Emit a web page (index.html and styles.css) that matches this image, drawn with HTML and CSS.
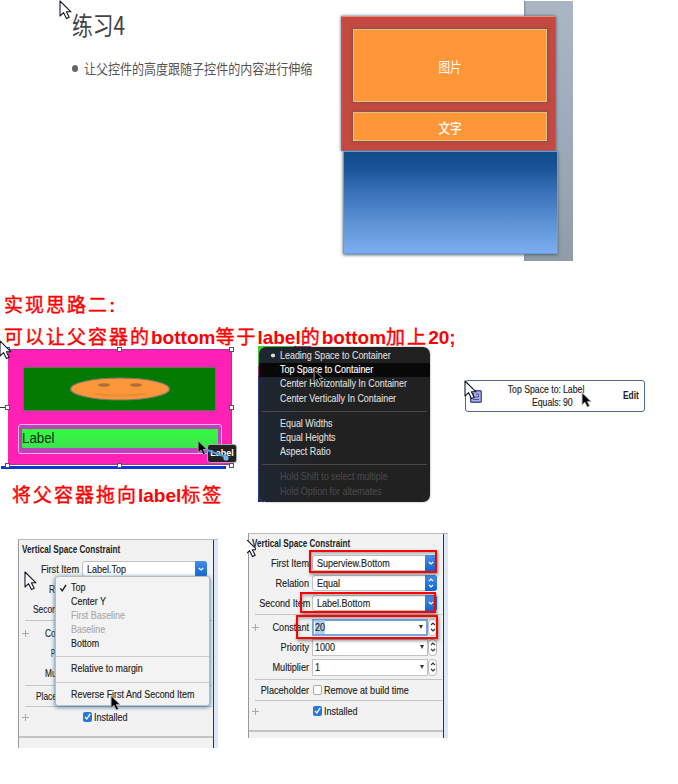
FILE: index.html
```html
<!DOCTYPE html>
<html lang="zh-CN">
<head>
<meta charset="utf-8">
<title>练习4</title>
<link rel="stylesheet" href="styles.css">
</head>
<body>
<svg class="defs" width="0" height="0">
  <symbol id="arrow" viewBox="0 0 13 20"><path d="M1 1V16L4.6 12.7L7.5 18.6L10.2 17.3L7.4 11.8H12Z" stroke-width="1.1" stroke-linejoin="round"/></symbol>
  <symbol id="down" viewBox="0 0 8 8"><path d="M1.8 3L4 5L6.2 3" fill="none" stroke="currentColor" stroke-width="1.2"/></symbol>
  <symbol id="updown" viewBox="0 0 8 14"><path d="M2 5L4 3L6 5M2 9L4 11L6 9" fill="none" stroke="currentColor" stroke-width="1.1"/></symbol>
  <symbol id="check" viewBox="0 0 9 9"><path d="M2 4.8L3.8 7L7.2 1.8" fill="none" stroke="currentColor" stroke-width="1.3"/></symbol>
</svg>

<section class="slide">
  <svg class="cursor c-slide"><use href="#arrow"/></svg>
  <div class="slide-text">
    <h1>练习4</h1>
    <p><i class="bullet"></i><span>让父控件的高度跟随子控件的内容进行伸缩</span></p>
  </div>
  <div class="diagram">
    <div class="parent">
      <div class="child picture"><span>图片</span></div>
      <div class="child words"><span>文字</span></div>
    </div>
    <div class="blue"></div>
  </div>
</section>

<section class="idea">
  <p><b>实现思路二</b>:</p>
  <p><b>可以让父容器的</b>bottom<b>等于</b>label<b>的</b>bottom<b>加上</b>20;</p>
</section>

<section class="figures">
  <div class="first">
    <div class="canvas">
      <div class="pink">
        <div class="green"><svg width="102" height="26" viewBox="0 0 102 26"><ellipse cx="51" cy="13" rx="49.5" ry="11" fill="#fb963a" stroke="#7b7668" stroke-width="1.2"/><ellipse cx="35" cy="9" rx="6" ry="1.7" fill="#ad703b"/><ellipse cx="67" cy="9" rx="6" ry="1.7" fill="#ad703b"/><path d="M25 18Q51 21 77 18" fill="none" stroke="#e88a31" stroke-width="1.5"/></svg></div>
        <div class="outline"><div class="lime"><span>Label</span></div></div>
      </div>
      <div class="baseline"></div>
      <div class="tip">Label</div>
      <svg class="marks" width="240" height="126">
        <path d="M0 61.5H8" stroke="#333"/>
        <path d="M199 101L226 111" stroke="#4d9bdb" stroke-width="2.2"/><circle cx="226" cy="112" r="2.6" fill="#73b9ed"/>
        <g fill="#fff" stroke="#555"><rect x="5.500" y="1.500" width="4" height="4"/><rect x="117.500" y="1.500" width="4" height="4"/><rect x="229.500" y="1.500" width="4" height="4"/><rect x="5.500" y="59.500" width="4" height="4"/><rect x="229.500" y="59.500" width="4" height="4"/><rect x="5.500" y="117.500" width="4" height="4"/><rect x="117.500" y="117.500" width="4" height="4"/><rect x="229.500" y="117.500" width="4" height="4"/></g>
      </svg>
      <svg class="cursor c-canvas"><use href="#arrow"/></svg>
      <svg class="cursor dark c-drag"><use href="#arrow"/></svg>
    </div>
    <p class="caption"><b>将父容器拖向</b>label<b>标签</b></p>
  </div>

  <div class="hud-wrap">
    <ul class="hud">
      <li class="dot"><span>Leading Space to Container</span></li>
      <li class="active"><span>Top Space to Container</span></li>
      <li><span>Center Horizontally In Container</span></li>
      <li><span>Center Vertically In Container</span></li>
      <li class="sep"></li>
      <li><span>Equal Widths</span></li>
      <li><span>Equal Heights</span></li>
      <li><span>Aspect Ratio</span></li>
      <li class="sep"></li>
      <li class="off"><span>Hold Shift to select multiple</span></li>
      <li class="off"><span>Hold Option for alternates</span></li>
    </ul>
    <svg class="cursor dark c-hud"><use href="#arrow"/></svg>
  </div>

  <div class="card">
    <svg class="chip" width="12" height="13" viewBox="0 0 12 13"><rect x=".7" y=".7" width="10.600" height="11.600" rx="1" fill="#b4a9ee" stroke="#3c5795" stroke-width="1.400"/><path d="M3 9.500H9M3.500 3V7H8.500V4H6" fill="none" stroke="#42539b"/></svg>
    <div class="pairs"><span class="k">Top Space to:</span><span>Label</span><span class="k">Equals:</span><span>90</span></div>
    <strong>Edit</strong>
    <svg class="cursor c-card"><use href="#arrow"/></svg>
    <svg class="cursor dark c-edit"><use href="#arrow"/></svg>
  </div>
</section>

<section class="panels">
  <div class="panel left">
    <h2><span>Vertical Space Constraint</span></h2>
    <div class="row"><label>First Item</label><div class="field"><span>Label.Top</span><i class="pop"><svg width="8" height="8"><use href="#down"/></svg></i></div></div>
    <div class="row"><label class="cut s2">R</label></div>
    <div class="row"><label class="cut">Secon</label></div>
    <hr>
    <div class="row"><em></em><label class="cut s1">Co</label></div>
    <div class="row"><label class="cut s3">P</label></div>
    <div class="row"><label class="cut s1">Mu</label></div>
    <hr class="h2">
    <div class="row short"><label class="cut s0">Place</label></div>
    <hr class="h3">
    <div class="row"><em></em><label></label><i class="box on"><svg width="9" height="9"><use href="#check"/></svg></i><span class="boxtext">Installed</span></div>
    <div class="rule"></div>
    <ul class="menu">
      <li><svg width="10" height="10"><use href="#check"/></svg><span>Top</span></li>
      <li><span>Center Y</span></li>
      <li class="off"><span>First Baseline</span></li>
      <li class="off"><span>Baseline</span></li>
      <li><span>Bottom</span></li>
      <li class="sep"></li>
      <li><span>Relative to margin</span></li>
      <li class="sep"></li>
      <li><span>Reverse First And Second Item</span></li>
    </ul>
    <svg class="cursor c-left"><use href="#arrow"/></svg>
    <svg class="cursor dark c-menu"><use href="#arrow"/></svg>
  </div>

  <div class="panel right">
    <h2><span>Vertical Space Constraint</span></h2>
    <div class="row"><label>First Item</label><div class="field"><span>Superview.Bottom</span><i class="pop"><svg width="8" height="8"><use href="#down"/></svg></i></div></div>
    <div class="row"><label>Relation</label><div class="field"><span>Equal</span><i class="pop"><svg width="8" height="14"><use href="#updown"/></svg></i></div></div>
    <div class="row"><label>Second Item</label><div class="field"><span>Label.Bottom</span><i class="pop"><svg width="8" height="8"><use href="#down"/></svg></i></div></div>
    <hr>
    <div class="row"><em></em><label>Constant</label><div class="field num focus"><span>20</span><i class="tri"></i></div><i class="step"><svg width="8" height="14"><use href="#updown"/></svg></i></div>
    <div class="row"><label>Priority</label><div class="field num"><span>1000</span><i class="tri"></i></div><i class="step"><svg width="8" height="14"><use href="#updown"/></svg></i></div>
    <div class="row"><label>Multiplier</label><div class="field num"><span>1</span><i class="tri"></i></div><i class="step"><svg width="8" height="14"><use href="#updown"/></svg></i></div>
    <hr class="h2">
    <div class="row short"><label>Placeholder</label><i class="box"></i><span class="boxtext">Remove at build time</span></div>
    <hr class="h3">
    <div class="row"><em></em><label></label><i class="box on"><svg width="9" height="9"><use href="#check"/></svg></i><span class="boxtext">Installed</span></div>
    <div class="rule"></div>
    <div class="mark m1"></div><div class="mark m2"></div><div class="mark m3"></div>
    <svg class="cursor c-right"><use href="#arrow"/></svg>
  </div>
</section>
</body>
</html>
```
FILE: styles.css
```css
* { box-sizing: border-box; }
body { margin: 0; width: 678px; height: 784px; overflow: hidden; background: #fff; color: #222; font: 11px/14px "Liberation Sans", "Noto Sans CJK SC", sans-serif; }
h1, h2, p, ul { margin: 0; padding: 0; list-style: none; }
.defs { position: absolute; }
.cursor { position: absolute; width: 13px; height: 20px; fill: #fff; stroke: #111827; z-index: 5; }
.cursor.dark { width: 11px; height: 16px; fill: #000; stroke: #aaa; }

/* Slide */
.slide { position: relative; display: flex; height: 290px; padding-top: 1px; }
.c-slide { left: 59px; top: 0; }
.slide-text { width: 340px; padding: 5px 0 0 72px; color: #444; }
.slide-text h1 { font: 400 25px/36px "Noto Sans CJK SC", sans-serif; transform: scaleX(.83); transform-origin: 0 50%; white-space: nowrap; }
.slide-text p { display: flex; align-items: center; margin-top: 15px; height: 22px; color: #555; }
.slide-text p span { font: 14px/20px "Noto Sans CJK SC", sans-serif; white-space: nowrap; transform: scaleX(.858); transform-origin: 0 50%; }
.bullet { flex: none; width: 6px; height: 7px; margin-right: 6px; border-radius: 50%; background: #666; }
.diagram { width: 233px; height: 260px; padding: 15px 0 0 1px; background: linear-gradient(90deg, #8c98a6 1px, transparent 2px) 184px 0 / 49px 260px no-repeat, linear-gradient(#acb5c3, #a2acbd 40%, #929ca8) 184px 0 / 49px 260px no-repeat; }
.parent { width: 215px; height: 135px; padding: 12px 8px 10px 11px; border: 1px solid #a9635f; border-top-color: #e88a80; background: #c44940; box-shadow: 0 0 3px #526274; }
.child { display: flex; align-items: center; justify-content: center; border: 1px solid #e4bc88; background: #ff9638; box-shadow: 0 0 2px 1px #805548; color: #fff; font: 14px/20px "Noto Sans CJK SC", sans-serif; }
.child span { transform: scaleX(.83); }
.picture { height: 73px; margin-bottom: 10px; }
.words { height: 29px; font-weight: 500; }
.blue { width: 215px; height: 103px; margin-left: 2px; border: 1px solid #5f9fe0; background: linear-gradient(#114d8b, #185497 16%, #3972b8 40%, #5b90d2 68%, #7cadf0); box-shadow: 0 1px 3px #53606e; }

/* Red notes */
.idea { height: 56px; }
.idea p, .caption { font: bold 19px/32px "Liberation Sans", "Noto Sans CJK SC", sans-serif; color: #f00; white-space: nowrap; }
.idea p { padding-left: 4px; }
.idea b, .caption b { letter-spacing: 2px; font-weight: 400; -webkit-text-stroke: .4px #f00; }

/* Figures */
.figures { display: flex; align-items: flex-start; height: 187px; }
.first { width: 258px; }
.canvas { position: relative; height: 123px; padding: 3px 0 0 8px; }
.pink { width: 224px; height: 116px; padding: 17px 10px 0; border: solid #a23b91; border-width: 1px 1px 1px 0; background: #ff20b5; }
.green { display: flex; align-items: center; justify-content: center; width: 193px; height: 44px; margin-left: 5px; border: 1px solid #65705f; background: #037b03; }
.outline { width: 204px; height: 30px; margin-top: 13px; padding: 4px 3px; border: 1px solid #fbb6ed; border-radius: 3px; background: #c140bb; }
.lime { height: 19px; background: linear-gradient(#31fa3b, #3ee452); color: #0b2d13; font-size: 14px; line-height: 19px; }
.lime span { display: inline-block; transform: scaleX(.95); transform-origin: 0; }
.baseline { width: 225px; height: 3px; margin: 1px 0 0 -7px; background: #0636d8; }
.tip { position: absolute; left: 207px; top: 98px; width: 30px; height: 19px; border: 1px solid #aaa; border-radius: 3px; background: #222; color: #fff; font: bold 9px/17px "Liberation Sans", sans-serif; text-align: center; }
.marks { position: absolute; left: 0; top: 0; }
.c-canvas { left: -1px; top: -6px; }
.c-drag { left: 197px; top: 94px; }
.caption { margin: 11px 0 0 12px; }

.hud-wrap { position: relative; width: 172px; height: 156px; background: linear-gradient(90deg, #38d52c 36px, #222 36px 38px, #a31d8a 38px 53px, transparent 53px) 0 0 / 100% 3px no-repeat, linear-gradient(#35d32a 20px, #9b1686 20px 30px, #172879 30px) 0 0 / 6px 100% no-repeat; }
.hud { height: 155px; margin: 0 0 0 1px; padding: 2px 0; border-radius: 7px; background: linear-gradient(90deg, #1c2733, #212121 34%); box-shadow: 0 0 2px #888; color: #ddd; font-size: 10.500px; transform: translateY(1px); }
.hud li { height: 14.200px; padding-left: 20.500px; line-height: 13px; white-space: nowrap; }
.hud span { display: inline-block; transform: translateY(-.5px) scaleX(.85); transform-origin: 0; -webkit-text-stroke: .15px; }
.hud .dot { background: radial-gradient(circle at 14px 6.500px, #ddd 1.700px, transparent 2.200px); }
.hud .active { background: #080808; color: #fff; }
.hud .off { color: #484848; }
.hud .sep { height: 1px; margin: 5px 3px 5px; background: #484848; }
.hud .sep + li { margin-top: 5px; }
.c-hud { left: 55px; top: 23px; stroke: #ccc; }

.card { position: relative; display: flex; align-items: center; width: 180px; height: 32px; margin: 34px 0 0 35px; padding-left: 4px; border: 1px solid #4c6793; border-radius: 3px; background: #fff; font-size: 10.500px; }
.pairs { display: grid; grid-template-columns: 79px 40px; column-gap: 2px; line-height: 13px; -webkit-text-stroke: .15px; }
.pairs span { transform: scaleX(.83); transform-origin: 0; white-space: nowrap; }
.pairs .k { transform-origin: 100%; text-align: right; }
.card strong { margin-left: 20px; transform: translateY(-1px) scaleX(.8); transform-origin: 0; }
.c-card { left: -2px; top: -1px; }
.c-edit { left: 115px; top: 11px; }

/* Inspector panels */
.panels { display: flex; align-items: flex-start; padding-left: 18px; }
.panel { position: relative; width: 200px; height: 205px; border-left: 1px solid #999; border-top: 1px solid #bbb; background: linear-gradient(90deg, #f2f2f2 194px, #303540 194px 195px, #dce7f7 195px); }
.left { height: 209px; margin: 5.500px 30px 0 0; }
.panel h2 { height: 19px; padding-left: 3px; font-size: 11px; line-height: 18px; white-space: nowrap; }
.panel h2 span, .field span, .boxtext, .menu span { display: inline-block; transform: scaleX(.82); transform-origin: 0; white-space: nowrap; }
.panel h2 span { transform: scaleX(.74); }
.row, .menu { -webkit-text-stroke: .15px; }
.row { position: relative; display: flex; align-items: center; height: 20px; }
.row label { width: 60px; margin-right: 3px; text-align: right; white-space: nowrap; transform: scaleX(.83); transform-origin: 100%; }
.row .cut { width: auto; margin-left: 14px; text-align: left; transform: scaleX(.76); transform-origin: 0; }
.row .s0 { margin-left: 17px; }
.row .s1 { margin-left: 26px; }
.row .s2 { margin-left: 30px; }
.row .s3 { margin-left: 32px; transform: scaleX(.55); }
.row em { position: absolute; left: 3px; top: 7px; width: 7px; height: 7px; background: linear-gradient(#aaa, #aaa) 3px 0 / 1px 7px no-repeat, linear-gradient(#aaa, #aaa) 0 3px / 7px 1px no-repeat; }
.field { display: flex; align-items: center; width: 125px; height: 16px; padding-left: 4px; border: 1px solid #c2c2c2; border-radius: 3px; background: #fff; }
.pop { display: flex; align-items: center; justify-content: center; width: 12px; height: 16px; margin: -1px -1px -1px auto; border-radius: 0 3px 3px 0; background: linear-gradient(#468ee7, #1463d1); color: #fff; }
.num { width: 116px; height: 17px; padding-left: 2px; border-radius: 0; }
.focus { border: 2px solid #76a8df; padding-left: 1px; }
.focus span { background: #acd0f5; }
.tri { margin: 0 3px 0 auto; border: solid transparent; border-width: 4px 2.500px 0; border-top-color: #333; }
.step { display: flex; align-items: center; justify-content: center; width: 9px; height: 17px; border: 1px solid #bbb; border-radius: 4px; background: #fff; color: #333; }
.step svg { flex: none; }
hr { height: 1px; margin: 1px 6px 2px 6px; border: 0; background: #c5c5c5; }
.h2 { margin: 2px 6px 0; }
.h3 { margin: 0 6px; }
.short { height: 20px; }
.box { display: flex; width: 9px; height: 10px; margin-left: 1px; border: 1px solid #aaa; border-radius: 2px; background: #fff; }
.on { border: 0; background: #2878da; color: #fff; }
.boxtext { margin-left: 2px; }
.rule { height: 2px; margin-top: 9px; width: 194px; background: #c4c4c4; }
.mark { position: absolute; border: 2px solid #f00; box-shadow: 1px 2px 3px #0006, inset 1px 2px 3px #0004; }
.m1 { left: 60px; top: 16px; width: 128px; height: 23px; }
.m2 { left: 51px; top: 58px; width: 136px; height: 21px; }
.m3 { left: 47px; top: 81px; width: 142px; height: 24px; }
.c-left { left: 5px; top: 31px; }
.c-menu { left: 91px; top: 155px; }
.c-right { left: -4px; top: 4px; clip-path: inset(2px 2px 1px 2px); }
.menu { position: absolute; left: 36px; top: 36px; width: 155px; height: 130px; padding-top: 4px; border: 1px solid #bbb; border-radius: 3px; background: #f3f3f3; box-shadow: 0 1px 4px #3878a0; }
.menu li { display: flex; position: relative; height: 14.200px; padding-left: 14.500px; line-height: 13px; }
.menu span { transform: scaleX(.81); }
.menu svg { position: absolute; left: 2px; top: 2px; }
.menu .off { color: #aaa; }
.menu .sep { height: 1px; margin: 5px 0 5px; background: #ccc; }
```
